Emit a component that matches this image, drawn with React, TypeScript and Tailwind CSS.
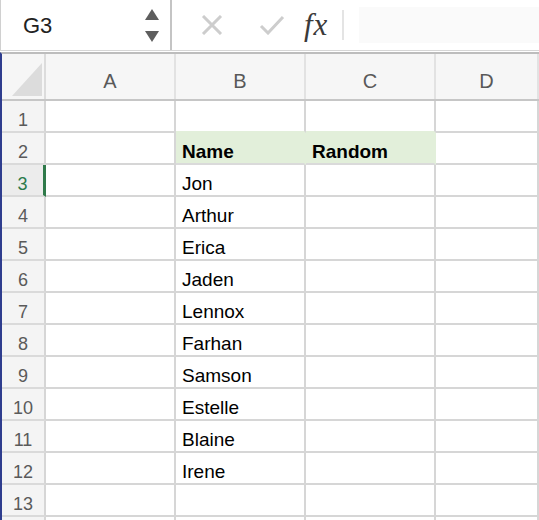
import React from 'react';

const names = ['Jon', 'Arthur', 'Erica', 'Jaden', 'Lennox', 'Farhan', 'Samson', 'Estelle', 'Blaine', 'Irene'];
const cols = ['A', 'B', 'C', 'D'];

type Cell = { text?: string; bold?: boolean; fill?: boolean; fillBelow?: boolean };

function rowCells(r: number): Cell[] {
  if (r === 1) return [{}, { fillBelow: true }, { fillBelow: true }, {}];
  if (r === 2) return [{}, { text: 'Name', bold: true, fill: true }, { text: 'Random', bold: true, fill: true }, {}];
  const n = names[r - 3];
  return [{}, { text: n }, {}, {}];
}

const Toolbar: React.FC = () => (
  <div className="flex h-[51px] border-b border-[#d6d6d6] bg-white">
    <div className="w-[172px] flex items-center justify-between pl-[22px] pr-[11px] border-l border-[#d0d0d0] border-r-2 border-r-[#c4c4c4]">
      <span className="text-[22px] text-[#222] leading-none pt-[1px]">G3</span>
      <div className="flex flex-col gap-[11px]">
        <svg width="14" height="11" viewBox="0 0 14 11"><path d="M7 0 L14 11 L0 11 Z" fill="#5e5e5e" /></svg>
        <svg width="14" height="11" viewBox="0 0 14 11"><path d="M0 0 L14 0 L7 11 Z" fill="#5e5e5e" /></svg>
      </div>
    </div>
    <div className="flex-1 flex items-center">
      <svg className="ml-[29px]" width="22" height="20" viewBox="0 0 22 20">
        <path d="M2 1 L20 19 M20 1 L2 19" stroke="#cdcdcd" strokeWidth="3" />
      </svg>
      <svg className="ml-[36px]" width="26" height="20" viewBox="0 0 26 20">
        <path d="M2 11 L9 18 L24 2" stroke="#cdcdcd" strokeWidth="3" fill="none" />
      </svg>
      <span className="ml-[19px] font-['Liberation_Serif',serif] italic text-[31px] text-[#3a3a3a] leading-none pb-[2px] tracking-[1px]">fx</span>
      <div className="ml-[14px] w-[2px] h-[30px] bg-[#e4e4e4]" />
      <div className="ml-[15px] flex-1 self-stretch my-[7px] bg-[#fafafa]" />
    </div>
  </div>
);

export default function App() {
  const rows = Array.from({ length: 14 }, (_, i) => i + 1);
  return (
    <div className="w-[539px] h-[520px] overflow-hidden bg-white font-['Liberation_Sans',Arial,sans-serif]">
      <Toolbar />
      <div className="h-[1px] bg-white" />
      <div className="border-l-2 border-[#2f3d8e] border-t-2 border-t-[#bdbdbd]">
        <div className="grid grid-cols-[44px_130px_130px_130px_1fr] h-[47px] border-b-2 border-[#c6c6c6] bg-[#f6f6f6]">
          <div className="relative border-r-2 border-[#dcdcdc]">
            <svg className="absolute left-[10px] bottom-[3px]" width="30" height="33" viewBox="0 0 30 33">
              <path d="M30 0 L30 33 L0 33 Z" fill="#dcdcdc" />
            </svg>
          </div>
          {cols.map((c) => (
            <div key={c} className="flex items-end justify-center pb-[8px] border-r-2 border-[#e2e2e2] text-[20px] leading-none text-[#595959]">
              {c}
            </div>
          ))}
        </div>
        {rows.map((r) => {
          const sel = r === 3;
          return (
            <div key={r} className="grid grid-cols-[44px_130px_130px_130px_1fr] h-[32px]">
              <div
                className={`flex items-end justify-center pb-[2px] border-b-2 border-[#dadada] text-[18px] leading-none ${
                  sel ? 'bg-[#ececec] text-[#2b7a4b] border-r-[3px] border-r-[#2f7a4a]' : 'bg-[#f4f4f4] text-[#5a5a5a] border-r-2 border-r-[#d6d6d6]'
                }`}
              >
                {r < 14 ? r : ''}
              </div>
              {rowCells(r).map((cell, i) => (
                <div
                  key={i}
                  className={`flex items-end pl-[6px] pb-[2px] text-[19px] leading-none text-black border-r-2 border-b-2 ${
                    cell.fill
                      ? 'bg-[#e2efda] border-r-[#e2efda] border-b-[#dadada] font-bold'
                      : cell.fillBelow
                      ? 'border-r-[#d6d6d6] border-b-[#e2efda]'
                      : 'border-[#d6d6d6]'
                  }`}
                >
                  {cell.text}
                </div>
              ))}
            </div>
          );
        })}
      </div>
    </div>
  );
}
